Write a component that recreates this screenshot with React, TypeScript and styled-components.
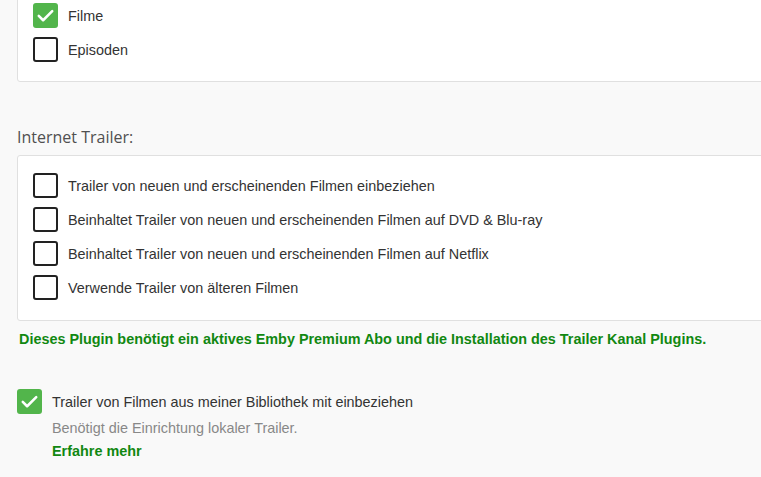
import React from "react";
import styled, { createGlobalStyle } from "styled-components";

const Global = createGlobalStyle`
  html, body { margin: 0; padding: 0; background: #f9f9f9; overflow: hidden; }
  body { font-family: "Liberation Sans", Arial, sans-serif; }
`;

const Page = styled.div`
  margin-top: -15px;
  padding-left: 17px;
  margin-right: -30px;
`;

const Panel = styled.div<{ $bottom?: number }>`
  background: #fff;
  border: 1px solid #e0e0e0;
  border-radius: 3px;
  padding: 17px 15px ${(p) => p.$bottom ?? 19}px;
  display: flex;
  flex-direction: column;
  gap: 9px;
`;

const Heading = styled.h2`
  margin: 45px 0 8px;
  font-family: "Open Sans", sans-serif;
  font-weight: 500;
  font-size: 16px;
  line-height: 20px;
  color: #505050;
`;

const Row = styled.label`
  display: flex;
  align-items: center;
  gap: 10px;
  height: 25px;
  font-size: 14.4px;
  color: #333;
`;

const Box = styled.span<{ $checked?: boolean }>`
  box-sizing: border-box;
  width: 25px;
  height: 25px;
  flex: none;
  border-radius: 3px;
  display: flex;
  align-items: center;
  justify-content: center;
  background: ${(p) => (p.$checked ? "#52b54b" : "#fff")};
  border: ${(p) => (p.$checked ? "none" : "2px solid #222")};
`;

const Note = styled.p`
  margin: 9px 0 0 2px;
  font-size: 14.4px;
  line-height: 18px;
  font-weight: bold;
  color: #118811;
`;

const Standalone = styled.div`
  margin-top: 41px;
  display: flex;
  flex-direction: column;
`;

const Sub = styled.div`
  padding-left: 35px;
  display: flex;
  flex-direction: column;
`;

const Hint = styled.div`
  margin-top: 5px;
  font-size: 14.4px;
  line-height: 18px;
  color: #888;
`;

const Link = styled.a`
  margin-top: 5px;
  font-size: 14.4px;
  line-height: 18px;
  font-weight: bold;
  color: #118811;
  text-decoration: none;
`;

const Check = () => (
  <svg width="19" height="19" viewBox="0 0 24 24" fill="none">
    <path d="M3.5 12.5l5.5 5.5L20.5 6.5" stroke="#fff" strokeWidth="3.2" strokeLinecap="round" strokeLinejoin="round" />
  </svg>
);

const CheckRow = ({ checked, children }: { checked?: boolean; children: React.ReactNode }) => (
  <Row>
    <Box $checked={checked}>{checked && <Check />}</Box>
    <span>{children}</span>
  </Row>
);

export default function App() {
  return (
    <Page>
      <Global />
      <Panel>
        <CheckRow checked>Filme</CheckRow>
        <CheckRow>Episoden</CheckRow>
      </Panel>
      <Heading>Internet Trailer:</Heading>
      <Panel $bottom={20}>
        <CheckRow>Trailer von neuen und erscheinenden Filmen einbeziehen</CheckRow>
        <CheckRow>Beinhaltet Trailer von neuen und erscheinenden Filmen auf DVD &amp; Blu-ray</CheckRow>
        <CheckRow>Beinhaltet Trailer von neuen und erscheinenden Filmen auf Netflix</CheckRow>
        <CheckRow>Verwende Trailer von älteren Filmen</CheckRow>
      </Panel>
      <Note>Dieses Plugin benötigt ein aktives Emby Premium Abo und die Installation des Trailer Kanal Plugins.</Note>
      <Standalone>
        <CheckRow checked>Trailer von Filmen aus meiner Bibliothek mit einbeziehen</CheckRow>
        <Sub>
          <Hint>Benötigt die Einrichtung lokaler Trailer.</Hint>
          <Link href="#">Erfahre mehr</Link>
        </Sub>
      </Standalone>
    </Page>
  );
}
